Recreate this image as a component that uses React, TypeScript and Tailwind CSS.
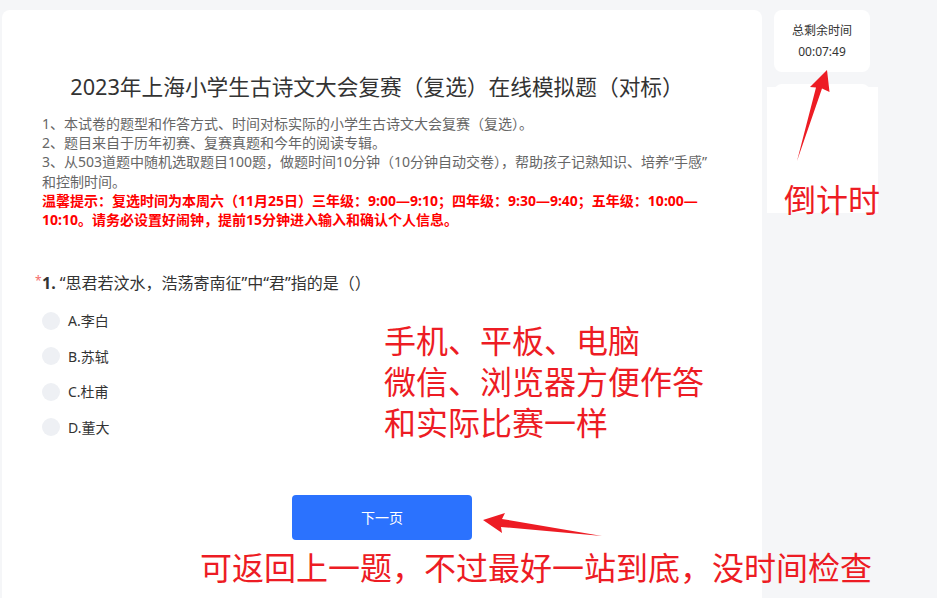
import React from 'react'

const options = ['A.李白', 'B.苏轼', 'C.杜甫', 'D.董大']

const red = 'text-[#ed1c24]'

export default function App() {
  return (
    <div className="relative w-[937px] h-[598px] overflow-hidden bg-[#f5f6f8] flex gap-3 pl-[2px] pt-[10px] font-['Noto_Sans','Noto_Sans_CJK_SC',sans-serif]">
      <main className="w-[760px] h-[588px] shrink-0 bg-white rounded-t-lg">
        <div className="pl-10 pr-10 pt-[62px]">
          <h1 className="pr-[10px] text-center text-[21.7px] leading-[30px] text-[#333] font-normal">
            2023年上海小学生古诗文大会复赛（复选）在线模拟题（对标）
          </h1>
          <div className="mt-[12px] text-[14px] leading-[19.2px] text-[#666]">
            <p>1、本试卷的题型和作答方式、时间对标实际的小学生古诗文大会复赛（复选）。</p>
            <p>2、题目来自于历年初赛、复赛真题和今年的阅读专辑。</p>
            <p>
              3、从503道题中随机选取题目100题，做题时间10分钟（10分钟自动交卷），帮助孩子记熟知识、培养“手感”
              <br />
              和控制时间。
            </p>
            <p className="font-bold text-[#ff0000]">
              温馨提示：复选时间为本周六（11月25日）三年级：9:00—9:10；四年级：9:30—9:40；五年级：10:00—
              <br />
              10:10。请务必设置好闹钟，提前15分钟进入输入和确认个人信息。
            </p>
          </div>

          <div className="relative mt-[44px] text-[16px] leading-[20px] text-[#333]">
            <span className="absolute -left-[7px] -top-[2px] text-[12px] text-[#f56c6c]">*</span>
            <span className="font-bold">1. </span>“思君若汶水，浩荡寄南征”中“君”指的是（）
          </div>

          <div className="mt-[10px] flex flex-col">
            {options.map(o => (
              <label key={o} className="h-[35.5px] flex items-center gap-2 text-[14px] text-[#333]">
                <span className="w-[18px] h-[18px] rounded-full bg-[#eef0f4]" />
                <span>{o}</span>
              </label>
            ))}
          </div>
        </div>

        <div className="mt-[50px] flex justify-center">
          <button className="w-[180px] h-[45px] rounded bg-[#2b72fe] text-white text-[14px]">下一页</button>
        </div>
      </main>

      <aside className="w-24 flex flex-col gap-3">
        <div className="h-[62px] bg-white rounded-lg flex flex-col items-center justify-center gap-[3px] text-[12px] leading-[18px] text-[#333]">
          <span>总剩余时间</span>
          <span>00:07:49</span>
        </div>
        <div className="h-[110px] bg-white rounded-lg" />
      </aside>

      {/* annotations */}
      <div className="absolute left-[767px] top-[87px] w-[111px] h-[126px] bg-white" />
      <div className={`absolute left-[784px] top-[180px] text-[32px] leading-[40px] ${red}`}>倒计时</div>
      <div className={`absolute left-[384px] top-[320px] flex flex-col text-[32px] leading-[41px] ${red}`}>
        <span>手机、平板、电脑</span>
        <span>微信、浏览器方便作答</span>
        <span>和实际比赛一样</span>
      </div>
      <div className={`absolute left-[200px] top-[548px] text-[32px] leading-[40px] whitespace-nowrap ${red}`}>
        可返回上一题，不过最好一站到底，没时间检查
      </div>
      <svg className="absolute left-0 top-0 pointer-events-none" width="937" height="598" viewBox="0 0 937 598">
        <polygon points="827,70 829.5,92 822,88.5 797,161 816,87.5 810,87" fill="#ed1c24" />
        <polygon points="483,520 505,513 502,519 602,536 501,527 502,533" fill="#ed1c24" />
      </svg>
    </div>
  )
}
